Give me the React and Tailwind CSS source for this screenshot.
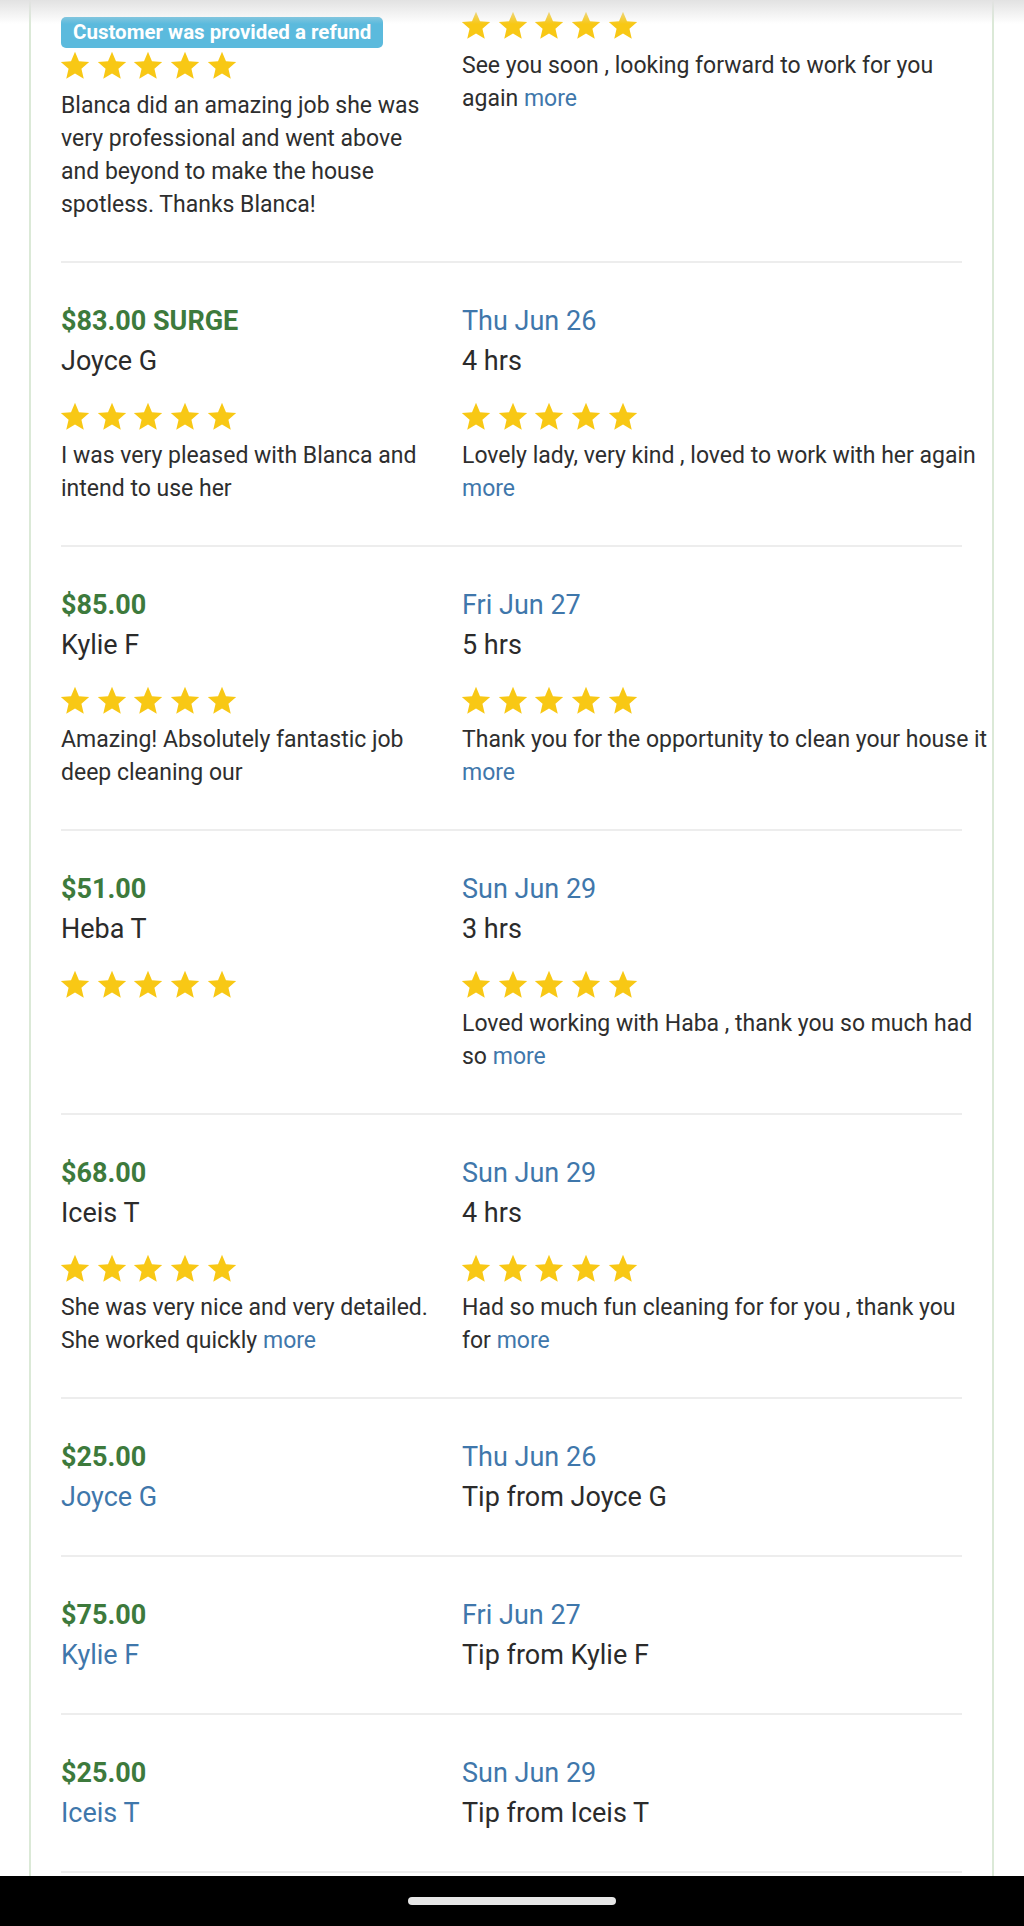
import React from 'react';

const reviews = [
  {
    amount: '$83.00 SURGE',
    name: 'Joyce G',
    date: 'Thu Jun 26',
    hrs: '4 hrs',
    left: ['I was very pleased with Blanca and', 'intend to use her'],
    leftMore: false,
    right: ['Lovely lady, very kind , loved to work with her again', ''],
    rightMore: true,
  },
  {
    amount: '$85.00',
    name: 'Kylie F',
    date: 'Fri Jun 27',
    hrs: '5 hrs',
    left: ['Amazing! Absolutely fantastic job', 'deep cleaning our'],
    leftMore: false,
    right: ['Thank you for the opportunity to clean your house it', ''],
    rightMore: true,
  },
  {
    amount: '$51.00',
    name: 'Heba T',
    date: 'Sun Jun 29',
    hrs: '3 hrs',
    left: [],
    leftMore: false,
    right: ['Loved working with Haba , thank you so much had', 'so'],
    rightMore: true,
  },
  {
    amount: '$68.00',
    name: 'Iceis T',
    date: 'Sun Jun 29',
    hrs: '4 hrs',
    left: ['She was very nice and very detailed.', 'She worked quickly'],
    leftMore: true,
    right: ['Had so much fun cleaning for for you , thank you', 'for'],
    rightMore: true,
  },
];

const tips = [
  { amount: '$25.00', name: 'Joyce G', date: 'Thu Jun 26', desc: 'Tip from Joyce G' },
  { amount: '$75.00', name: 'Kylie F', date: 'Fri Jun 27', desc: 'Tip from Kylie F' },
  { amount: '$25.00', name: 'Iceis T', date: 'Sun Jun 29', desc: 'Tip from Iceis T' },
];

// material "star" glyph
const Star = () => (
  <svg viewBox="0 0 24 24" className="w-[34px] h-[34px] shrink-0" fill="#f8c815">
    <path d="M12 17.27L18.18 21l-1.64-7.03L22 9.24l-7.19-.61L12 2 9.19 8.63 2 9.24l5.46 4.73L5.82 21z" />
  </svg>
);

const Stars = ({ className = '' }) => (
  <div className={`flex gap-[2.7px] -ml-[3px] ${className}`}>
    {[0, 1, 2, 3, 4].map((i) => (
      <Star key={i} />
    ))}
  </div>
);

const ReviewText = ({ lines, more, className = '' }) => {
  if (!lines.length) return null;
  return (
    <div className={`text-[23px] leading-[33px] text-[#2e2e2e] ${className}`}>
      {lines.map((line, i) => {
        const last = i === lines.length - 1;
        return (
          <div key={i} className="whitespace-nowrap">
            {line}
            {last && more && (
              <span className="text-[#3f77ab]">{line ? ' more' : 'more'}</span>
            )}
          </div>
        );
      })}
    </div>
  );
};

const ReviewRow = ({ r }) => (
  <div className="grid grid-cols-[401px_1fr] border-b-2 border-[#ededed] pt-[38px] pb-[40px]">
    <div>
      <div className="text-[27px] leading-[40px] font-bold text-[#3d7a3c]">{r.amount}</div>
      <div className="text-[27px] leading-[40px] text-[#2b2b2b]">{r.name}</div>
      <Stars className="mt-[19px]" />
      <ReviewText lines={r.left} more={r.leftMore} className="mt-[5px]" />
    </div>
    <div>
      <div className="text-[27px] leading-[40px] text-[#3f77ab]">{r.date}</div>
      <div className="text-[27px] leading-[40px] text-[#2b2b2b]">{r.hrs}</div>
      <Stars className="mt-[19px]" />
      <ReviewText lines={r.right} more={r.rightMore} className="mt-[5px]" />
    </div>
  </div>
);

const TipRow = ({ t }) => (
  <div className="grid grid-cols-[401px_1fr] border-b-2 border-[#ededed] py-[38px]">
    <div>
      <div className="text-[27px] leading-[40px] font-bold text-[#3d7a3c]">{t.amount}</div>
      <div className="text-[27px] leading-[40px] text-[#3f77ab]">{t.name}</div>
    </div>
    <div>
      <div className="text-[27px] leading-[40px] text-[#3f77ab]">{t.date}</div>
      <div className="text-[27px] leading-[40px] text-[#2b2b2b]">{t.desc}</div>
    </div>
  </div>
);

export default function App() {
  return (
    <div className="relative h-[1926px] w-[1024px] bg-white flex flex-col overflow-hidden font-['Roboto','Liberation_Sans',sans-serif]">
      <div className="flex-1 overflow-hidden">
        <div className="ml-[29px] w-[965px] h-full border-x-2 border-[#dbe9d7] px-[30px] overflow-hidden">
          {/* partly scrolled first entry */}
          <div className="grid grid-cols-[401px_1fr] h-[263px] border-b-2 border-[#ededed]">
            <div className="pt-[17px]">
              <div className="inline-block h-[31px] rounded-[5px] bg-[#5bbadd] px-[12px] text-[20.5px] leading-[31px] font-bold text-white">
                Customer was provided a refund
              </div>
              <Stars className="mt-[1px]" />
              <ReviewText
                className="mt-[6px]"
                lines={[
                  'Blanca did an amazing job she was',
                  'very professional and went above',
                  'and beyond to make the house',
                  'spotless. Thanks Blanca!',
                ]}
                more={false}
              />
            </div>
            <div className="pt-[9px]">
              <Stars />
              <ReviewText
                className="mt-[6px]"
                lines={['See you soon , looking forward to work for you', 'again']}
                more
              />
            </div>
          </div>

          {reviews.map((r) => (
            <ReviewRow key={r.name + r.date} r={r} />
          ))}
          {tips.map((t) => (
            <TipRow key={t.desc} t={t} />
          ))}
        </div>
      </div>

      {/* android nav bar */}
      <div className="h-[50px] bg-black flex items-start justify-center pt-[21px]">
        <div className="w-[208px] h-[8px] rounded-full bg-[#e6e6e6]" />
      </div>

      {/* header shadow */}
      <div className="absolute top-0 left-0 right-0 h-[24px] bg-gradient-to-b from-[#e2e2e2] to-transparent pointer-events-none" />
    </div>
  );
}
